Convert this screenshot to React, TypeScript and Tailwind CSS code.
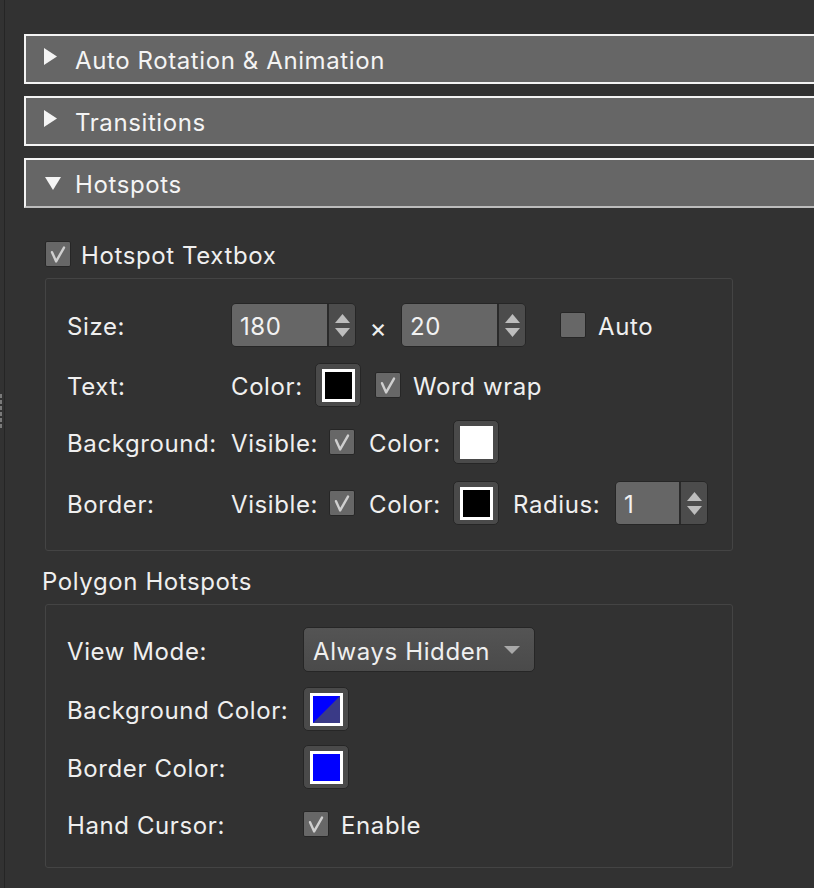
import React from "react";

const font = { fontFamily: "Inter, 'Open Sans', sans-serif" };

function Check({ checked = true }: { checked?: boolean }) {
  return (
    <div className="w-[26px] h-[26px] shrink-0 bg-[#676767] border border-[#262626] rounded-[2px] flex items-center justify-center">
      {checked && (
        <svg width="26" height="26" viewBox="0 0 26 26" fill="none">
          <path d="M6.5 11 L11 21 L19.5 6" stroke="#cfcfcf" strokeWidth="2.6" strokeLinecap="round" strokeLinejoin="round" />
        </svg>
      )}
    </div>
  );
}

function Spinner({ value, width }: { value: string; width: string }) {
  return (
    <div className={`${width} h-[44px] shrink-0 flex rounded-[5px] border border-[#262626] overflow-hidden`}>
      <div className="flex-1 bg-[#666666] flex items-center pl-[8px] pt-[3px] text-[#f2f2f2]">{value}</div>
      <div className="w-[28px] bg-[#4c4c4c] border-l-2 border-[#2a2a2a] flex flex-col items-center justify-center gap-[5px]">
        <svg width="15" height="9" viewBox="0 0 15 9"><path d="M7.5 0 L15 9 L0 9 Z" fill="#bdbdbd" /></svg>
        <svg width="15" height="9" viewBox="0 0 15 9"><path d="M0 0 L15 0 L7.5 9 Z" fill="#bdbdbd" /></svg>
      </div>
    </div>
  );
}

function Swatch({ kind }: { kind: "black" | "white" | "blue" | "split" }) {
  const inner =
    kind === "black" ? "bg-black" : kind === "white" ? "bg-white" : kind === "blue" ? "bg-[#0000ff]" : "";
  return (
    <div className="w-[46px] h-[44px] shrink-0 rounded-[5px] bg-[#4a4a4a] border border-[#262626] flex items-center justify-center">
      <div className="w-[33px] h-[33px] border-[3px] border-white">
        {kind === "split" ? (
          <svg width="27" height="27" viewBox="0 0 27 27" className="block">
            <rect width="27" height="27" fill="#3a3a86" />
            <path d="M0 0 L27 0 L0 27 Z" fill="#0000ff" />
          </svg>
        ) : (
          <div className={`w-full h-full ${inner}`} />
        )}
      </div>
    </div>
  );
}

function Header({ title, open = false }: { title: string; open?: boolean }) {
  return (
    <div
      className={`h-[50px] mr-[-8px] flex items-center bg-[#666666] border-2 border-r-0 border-[#f4f4f4] ${
        open ? "border-b-[#bcbcbc]" : ""
      }`}
    >
      <div className="w-[49px] flex justify-center pl-[4px]">
        {open ? (
          <svg width="16" height="13" viewBox="0 0 16 13"><path d="M0 0 L16 0 L8 13 Z" fill="#f4f4f4" /></svg>
        ) : (
          <svg width="13" height="17" viewBox="0 0 13 17" className="mb-[5px] mr-[4px]"><path d="M0 0 L13 8.5 L0 17 Z" fill="#f4f4f4" /></svg>
        )}
      </div>
      <span className="text-[#f4f4f4] pt-[3px]">{title}</span>
    </div>
  );
}

// row text sits a touch lower than the box centre
const t = "pt-[4px]";

export default function App() {
  return (
    <div
      className="w-[814px] h-[888px] bg-[#323232] flex overflow-hidden text-[#efefef] text-[24px] tracking-[0.6px]"
      style={font}
    >
      {/* left edge with grip */}
      <div className="w-[4px] flex flex-col gap-[2px] pt-[394px]">
        {[0, 1, 2, 3, 4, 5].map((i) => (
          <div key={i} className="w-[2px] h-[4px] bg-[#7a7a7a]" />
        ))}
      </div>
      <div className="w-px bg-[#252525]" />

      <div className="flex-1 pl-[19px] pt-[34px]">
        <div className="flex flex-col gap-[12px]">
          <Header title="Auto Rotation & Animation" />
          <Header title="Transitions" />
          <Header title="Hotspots" open />
        </div>

        <div className="pl-[21px] w-[709px]">
          {/* Hotspot Textbox */}
          <div className="flex items-center gap-[10px] mt-[32px] h-[27px]">
            <Check />
            <span className="pt-[4px]">Hotspot Textbox</span>
          </div>

          <div className="mt-[11px] border border-[#444444] rounded-[3px] pl-[21px] pt-[24px] pb-[25px]">
            <div className="flex items-center h-[44px]">
              <span className={`w-[164px] ${t}`}>Size:</span>
              <Spinner value="180" width="w-[125px]" />
              <span className={`w-[45px] text-center text-[26px] ${t}`}>×</span>
              <Spinner value="20" width="w-[125px]" />
              <div className="ml-[34px]"><Check checked={false} /></div>
              <span className={`ml-[12px] ${t}`}>Auto</span>
            </div>
            <div className="flex items-center h-[44px] mt-[16px]">
              <span className={`w-[164px] ${t}`}>Text:</span>
              <span className={`w-[84px] ${t}`}>Color:</span>
              <Swatch kind="black" />
              <div className="ml-[14px]"><Check /></div>
              <span className={`ml-[12px] ${t}`}>Word wrap</span>
            </div>
            <div className="flex items-center h-[44px] mt-[13px]">
              <span className={`w-[164px] ${t}`}>Background:</span>
              <span className={`w-[98px] ${t}`}>Visible:</span>
              <Check />
              <span className={`ml-[14px] w-[84px] ${t}`}>Color:</span>
              <Swatch kind="white" />
            </div>
            <div className="flex items-center h-[44px] mt-[17px]">
              <span className={`w-[164px] ${t}`}>Border:</span>
              <span className={`w-[98px] ${t}`}>Visible:</span>
              <Check />
              <span className={`ml-[14px] w-[84px] ${t}`}>Color:</span>
              <Swatch kind="black" />
              <span className={`ml-[14px] w-[102px] ${t}`}>Radius:</span>
              <Spinner value="1" width="w-[93px]" />
            </div>
          </div>

          {/* Polygon Hotspots */}
          <div className="mt-[17px] h-[28px] flex items-center ml-[-3px]">Polygon Hotspots</div>

          <div className="mt-[8px] border border-[#444444] rounded-[3px] pl-[21px] pt-[22px] pb-[21px]">
            <div className="flex items-center h-[45px]">
              <span className={`w-[236px] ${t}`}>View Mode:</span>
              <div className="w-[232px] h-[45px] rounded-[5px] border border-[#262626] bg-gradient-to-b from-[#545454] to-[#4a4a4a] flex items-center justify-between pl-[9px] pr-[14px]">
                <span className={t}>Always Hidden</span>
                <svg width="16" height="8" viewBox="0 0 16 8"><path d="M0 0 L16 0 L8 8 Z" fill="#a9a9a9" /></svg>
              </div>
            </div>
            <div className="flex items-center h-[44px] mt-[15px]">
              <span className={`w-[236px] ${t}`}>Background Color:</span>
              <Swatch kind="split" />
            </div>
            <div className="flex items-center h-[44px] mt-[14px]">
              <span className={`w-[236px] ${t}`}>Border Color:</span>
              <Swatch kind="blue" />
            </div>
            <div className="flex items-center h-[44px] mt-[13px]">
              <span className={`w-[236px] ${t}`}>Hand Cursor:</span>
              <Check />
              <span className={`ml-[12px] ${t}`}>Enable</span>
            </div>
          </div>
        </div>
      </div>
    </div>
  );
}
